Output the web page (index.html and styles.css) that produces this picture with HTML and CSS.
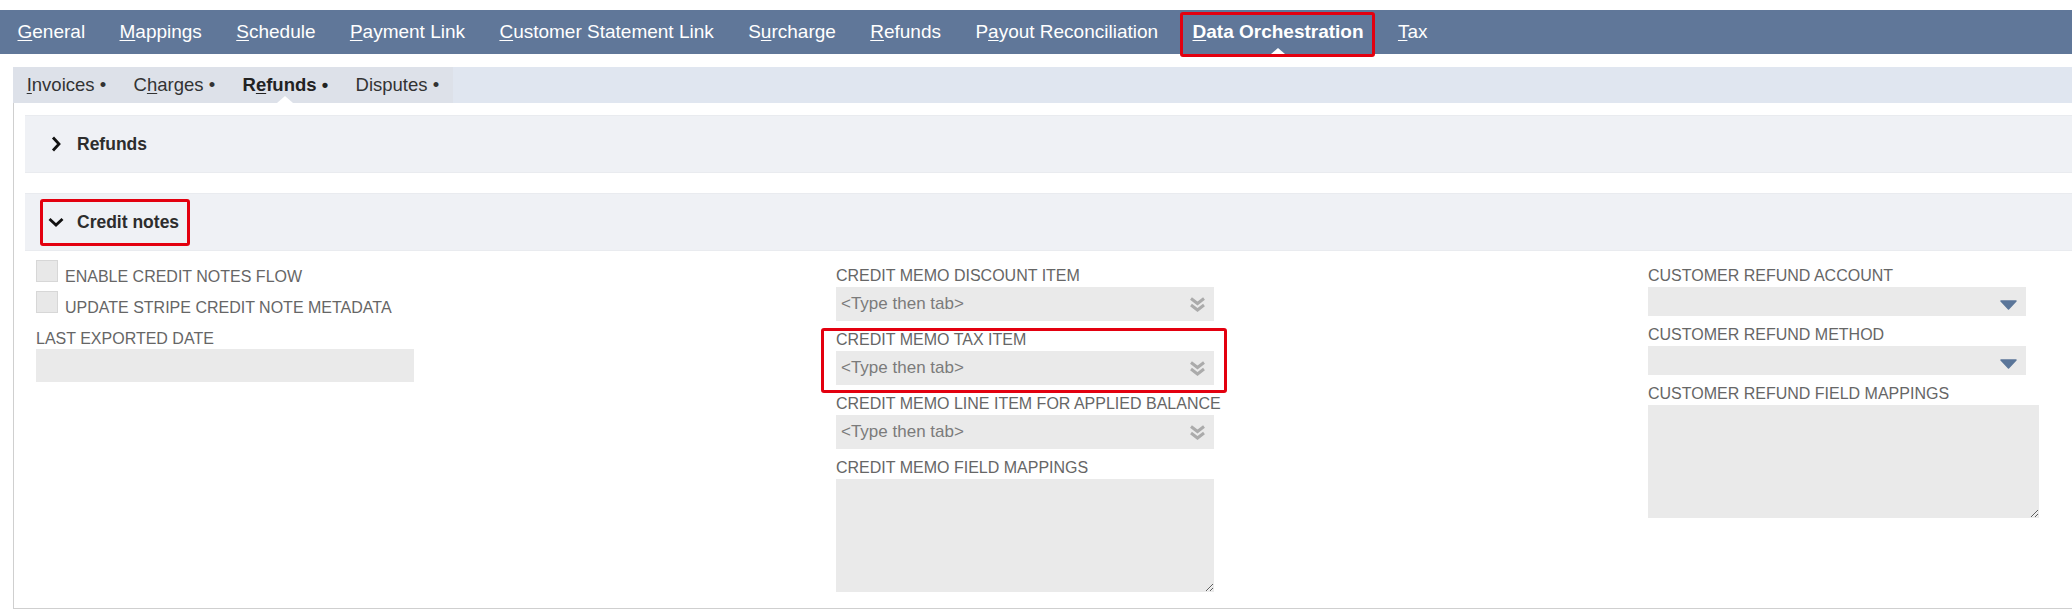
FILE: index.html
```html
<!DOCTYPE html>
<html lang="en">
<head>
    <meta charset="UTF-8">
    <meta name="viewport" content="width=device-width, initial-scale=1.0">
    <title>Data Orchestration - Credit notes</title>
    <link rel="stylesheet" href="styles.css">
</head>
<body>
    <div class="topnav">
        <a class="nav-item" href="#"><u>G</u>eneral</a>
        <a class="nav-item" href="#"><u>M</u>appings</a>
        <a class="nav-item" href="#"><u>S</u>chedule</a>
        <a class="nav-item" href="#"><u>P</u>ayment Link</a>
        <a class="nav-item" href="#"><u>C</u>ustomer Statement Link</a>
        <a class="nav-item" href="#">S<u>u</u>rcharge</a>
        <a class="nav-item" href="#"><u>R</u>efunds</a>
        <a class="nav-item" href="#">P<u>a</u>yout Reconciliation</a>
        <a class="nav-item active marked" href="#"><u>D</u>ata Orchestration</a>
        <a class="nav-item" href="#"><u>T</u>ax</a>
    </div>

    <div class="page">
        <div class="subnav">
            <div class="subtabs">
                <a class="subtab" href="#"><u>I</u>nvoices •</a>
                <a class="subtab" href="#">C<u>h</u>arges •</a>
                <a class="subtab active" href="#">R<u>e</u>funds •</a>
                <a class="subtab" href="#">Disputes •</a>
            </div>
        </div>

        <div class="content">
            <div class="section-header">
                <span class="header-label">
                    <svg class="chevron" width="16" height="16" viewBox="0 0 16 16">
                        <path d="M5 1.5 L11 8 L5 14.5" fill="none" stroke="#111" stroke-width="2.8"/>
                    </svg>
                    <span>Refunds</span>
                </span>
            </div>

            <div class="section-header">
                <span class="header-label marked">
                    <svg class="chevron" width="16" height="16" viewBox="0 0 16 16">
                        <path d="M1.5 5 L8 11 L14.5 5" fill="none" stroke="#111" stroke-width="2.8"/>
                    </svg>
                    <span>Credit notes</span>
                </span>
            </div>

            <div class="fields">
                <!-- left column -->
                <div class="col">
                    <div class="check-row">
                        <span class="checkbox"></span>
                        <span class="check-label">ENABLE CREDIT NOTES FLOW</span>
                    </div>
                    <div class="check-row">
                        <span class="checkbox"></span>
                        <span class="check-label">UPDATE STRIPE CREDIT NOTE METADATA</span>
                    </div>
                    <div class="field-group">
                        <div class="field-label first">LAST EXPORTED DATE</div>
                        <input class="text-input date-input" type="text">
                    </div>
                </div>

                <!-- middle column -->
                <div class="col">
                    <div class="field-group">
                        <div class="field-label">CREDIT MEMO DISCOUNT ITEM</div>
                        <div class="lookup">
                            <input type="text" placeholder="<Type then tab>">
                            <svg class="lookup-icon" width="17" height="17" viewBox="0 0 17 17">
                                <path d="M2 2.5 L8.5 7.5 L15 2.5 M2 9 L8.5 14 L15 9" fill="none" stroke="#ababab" stroke-width="3"/>
                            </svg>
                        </div>
                    </div>
                    <div class="field-group marked">
                        <div class="field-label">CREDIT MEMO TAX ITEM</div>
                        <div class="lookup">
                            <input type="text" placeholder="<Type then tab>">
                            <svg class="lookup-icon" width="17" height="17" viewBox="0 0 17 17">
                                <path d="M2 2.5 L8.5 7.5 L15 2.5 M2 9 L8.5 14 L15 9" fill="none" stroke="#ababab" stroke-width="3"/>
                            </svg>
                        </div>
                    </div>
                    <div class="field-group">
                        <div class="field-label">CREDIT MEMO LINE ITEM FOR APPLIED BALANCE</div>
                        <div class="lookup">
                            <input type="text" placeholder="<Type then tab>">
                            <svg class="lookup-icon" width="17" height="17" viewBox="0 0 17 17">
                                <path d="M2 2.5 L8.5 7.5 L15 2.5 M2 9 L8.5 14 L15 9" fill="none" stroke="#ababab" stroke-width="3"/>
                            </svg>
                        </div>
                    </div>
                    <div class="field-group">
                        <div class="field-label">CREDIT MEMO FIELD MAPPINGS</div>
                        <textarea class="mappings"></textarea>
                    </div>
                </div>

                <!-- right column -->
                <div class="col">
                    <div class="field-group">
                        <div class="field-label">CUSTOMER REFUND ACCOUNT</div>
                        <div class="dropdown">
                            <svg width="17" height="10" viewBox="0 0 17 10">
                                <path d="M1 1 L16 1 L8.5 9 Z" fill="#5b7699" stroke="#5b7699" stroke-width="1.5" stroke-linejoin="round"/>
                            </svg>
                        </div>
                    </div>
                    <div class="field-group">
                        <div class="field-label">CUSTOMER REFUND METHOD</div>
                        <div class="dropdown">
                            <svg width="17" height="10" viewBox="0 0 17 10">
                                <path d="M1 1 L16 1 L8.5 9 Z" fill="#5b7699" stroke="#5b7699" stroke-width="1.5" stroke-linejoin="round"/>
                            </svg>
                        </div>
                    </div>
                    <div class="field-group wide">
                        <div class="field-label">CUSTOMER REFUND FIELD MAPPINGS</div>
                        <textarea class="mappings"></textarea>
                    </div>
                </div>
            </div>
        </div>
    </div>
</body>
</html>
```

FILE: styles.css
```css
body {
    font-family: "Liberation Sans", Arial, sans-serif;
    margin: 0;
    padding: 0;
    background-color: #fff;
    color: #333;
}
u {
    text-decoration-thickness: 1px;
    text-underline-offset: 2px;
}

/* top tabs */
.topnav {
    display: flex;
    height: 44px;
    margin-top: 10px;
    background-color: #607799;
}
.nav-item {
    position: relative;
    padding: 0 17.2px;
    line-height: 44px;
    font-size: 19px;
    color: #fff;
    text-decoration: none;
    white-space: nowrap;
}
.nav-item:first-child {
    padding-left: 17.5px;
}
.nav-item.active {
    font-weight: bold;
}
.nav-item.active::before {
    content: "";
    position: absolute;
    left: 50%;
    bottom: 0;
    margin-left: -7px;
    border-left: 7px solid transparent;
    border-right: 7px solid transparent;
    border-bottom: 6px solid #fff;
}
/* red highlight boxes from the screenshot */
.nav-item.marked::after {
    content: "";
    position: absolute;
    left: 4.5px;
    right: 6px;
    top: 2px;
    bottom: -3px;
    border: 3px solid #e3000f;
    border-radius: 3px;
}

.page {
    margin-left: 13px;
}

/* sub tabs */
.subnav {
    height: 36px;
    margin-top: 13px;
    background-color: #e0e6f0;
}
.subtabs {
    display: inline-flex;
    height: 36px;
    background-color: #dde1e9;
}
.subtab {
    position: relative;
    padding: 0 13.7px;
    line-height: 36px;
    font-size: 18.5px;
    color: #333;
    text-decoration: none;
    white-space: nowrap;
}
.subtab.active {
    font-weight: bold;
    color: #222;
}
.subtab.active::after {
    content: "";
    position: absolute;
    left: 50%;
    bottom: 0;
    margin-left: -8px;
    border-left: 8px solid transparent;
    border-right: 8px solid transparent;
    border-bottom: 7px solid #fff;
}

/* main panel */
.content {
    border-left: 1px solid #cfcfcf;
    border-bottom: 1px solid #cfcfcf;
    padding: 12px 0 16px 11px;
}
.section-header {
    display: flex;
    align-items: center;
    height: 56px;
    margin-bottom: 20px;
    background-color: #eff1f5;
    border-top: 1px solid #e9ebef;
    border-bottom: 1px solid #e9ebef;
}
.header-label {
    display: inline-flex;
    align-items: center;
    height: 41px;
    margin-left: 15px;
    padding: 0 8px 0 5px;
    border: 3px solid transparent;
    border-radius: 3px;
    font-size: 17.5px;
    font-weight: bold;
    color: #2d2d2d;
}
.header-label.marked {
    border-color: #e3000f;
}
.chevron {
    margin-right: 13px;
}

.fields {
    display: grid;
    grid-template-columns: 800px 812px 1fr;
    margin-top: -14px;
    padding-left: 11px;
}
.col {
    min-width: 0;
}

.check-row {
    display: flex;
    height: 31px;
}
.check-row:first-child {
    margin-top: 3px;
}
.checkbox {
    width: 20px;
    height: 20px;
    background-color: #e8e8e8;
    border: 1px solid #d7d7d7;
    margin-right: 7px;
}
.check-label {
    padding-top: 7px;
    line-height: 20px;
    font-size: 16px;
    color: #666;
    white-space: nowrap;
}

.field-group {
    position: relative;
    width: 378px;
}
.field-group.wide {
    width: 391px;
}
.field-group.marked::after {
    content: "";
    position: absolute;
    left: -15px;
    right: -13px;
    top: 7px;
    bottom: -8px;
    border: 3px solid #e3000f;
    border-radius: 3px;
}
.field-label {
    padding-top: 9px;
    margin-bottom: 1px;
    line-height: 20px;
    font-size: 16px;
    color: #666;
    white-space: nowrap;
}
.field-label.first {
    padding-top: 7px;
    margin-bottom: 0;
}

.text-input,
.lookup input,
.mappings {
    font-family: "Liberation Sans", Arial, sans-serif;
    font-size: 17px;
    color: #555;
    border: none;
    outline: none;
}
.date-input {
    display: block;
    width: 100%;
    height: 33px;
    box-sizing: border-box;
    background-color: #eaeaea;
}
.lookup {
    display: flex;
    align-items: center;
    height: 34px;
    background-color: #eaeaea;
}
.lookup input {
    flex: 1;
    min-width: 0;
    height: 100%;
    padding: 0 0 0 5px;
    background-color: transparent;
}
.lookup input::placeholder {
    color: #7b7b7b;
}
.lookup-icon {
    margin-right: 8px;
    margin-top: 1px;
}
.dropdown {
    display: flex;
    align-items: center;
    justify-content: flex-end;
    height: 29px;
    padding-right: 9px;
    padding-top: 6px;
    box-sizing: border-box;
    background-color: #eaeaea;
}
.mappings {
    display: block;
    width: 100%;
    height: 113px;
    box-sizing: border-box;
    padding: 4px;
    background-color: #eaeaea;
}
```
